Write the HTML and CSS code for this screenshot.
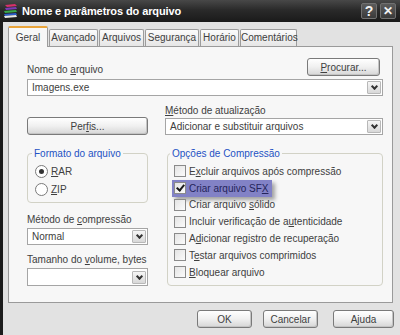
FILE: index.html
```html
<!DOCTYPE html>
<html lang="pt">
<head>
  <meta charset="UTF-8" />
  <title>Nome e parâmetros do arquivo</title>
  <link rel="stylesheet" href="styles.css">
</head>
<body>
  <div class="window">
    <div class="titlebar">
      <svg class="app-icon" width="16" height="16" viewBox="0 0 16 16">
        <polygon points="2,2 12,1 14,3 4,4" fill="#d8306a"/>
        <polygon points="2,5 13,4 14,6 3,7" fill="#7a3cb8"/>
        <polygon points="1,8 13,7 14,9 2,10" fill="#3aa84a"/>
        <polygon points="1,11 13,10 14,12 2,13" fill="#2a5cc8"/>
        <polygon points="1,13 13,12 14,14 2,15" fill="#e8e8e8"/>
      </svg>
      <span class="title">Nome e parâmetros do arquivo</span>
      <span class="tb-btn">?</span>
      <span class="tb-btn close">✕</span>
    </div>

    <div class="frame">
      <div class="tabs">
        <div class="tab active w-geral">Geral</div>
        <div class="tab w-avanc">Avançado</div>
        <div class="tab w-arq">Arquivos</div>
        <div class="tab w-seg">Segurança</div>
        <div class="tab w-hor">Horário</div>
        <div class="tab w-com">Comentários</div>
      </div>

      <div class="panel">
        <div class="row-top">
          <span class="label">Nome do <u>a</u>rquivo</span>
          <button class="btn browse"><u>P</u>rocurar...</button>
        </div>
        <div class="combo wide">
          <span class="combo-text">Imagens.exe</span>
          <span class="arrow"></span>
        </div>

        <div class="grid-mid">
          <button class="btn profiles">Per<u>f</u>is...</button>
          <div>
            <div class="label"><u>M</u>étodo de atualização</div>
            <div class="combo">
              <span class="combo-text">Adicionar e substituir arquivos</span>
              <span class="arrow"></span>
            </div>
          </div>
        </div>

        <div class="grid-low">
          <div class="col-left">
            <fieldset class="group format">
              <legend>Formato do arquivo</legend>
              <div class="opt"><span class="radio on"></span><span><u>R</u>AR</span></div>
              <div class="opt"><span class="radio"></span><span><u>Z</u>IP</span></div>
            </fieldset>
            <div class="label gap-label">Método de <u>c</u>ompressão</div>
            <div class="combo">
              <span class="combo-text">Normal</span>
              <span class="arrow"></span>
            </div>
            <div class="label gap-label2">Tamanho do <u>v</u>olume, bytes</div>
            <div class="combo tall">
              <span class="combo-text"></span>
              <span class="arrow"></span>
            </div>
          </div>

          <fieldset class="group options">
            <legend>Opções de Compressão</legend>
            <div class="check-row"><span class="box"></span><span>E<u>x</u>cluir arquivos após compressão</span></div>
            <div class="check-row marked"><span class="box checked"></span><span>Criar arquivo SF<u>X</u></span></div>
            <div class="check-row"><span class="box"></span><span>Criar arquivo <u>s</u>ólido</span></div>
            <div class="check-row"><span class="box"></span><span>Incluir verificação de a<u>u</u>tenticidade</span></div>
            <div class="check-row"><span class="box"></span><span>A<u>d</u>icionar registro de recuperação</span></div>
            <div class="check-row"><span class="box"></span><span>T<u>e</u>star arquivos comprimidos</span></div>
            <div class="check-row"><span class="box"></span><span><u>B</u>loquear arquivo</span></div>
          </fieldset>
        </div>
      </div>

      <div class="actions">
        <button class="btn ok">OK</button>
        <button class="btn cancel">Cancelar</button>
        <button class="btn help">Ajuda</button>
      </div>
    </div>
  </div>
</body>
</html>
```

FILE: styles.css
```css
body {
  margin: 0;
  background: #e2e2e2;
}
.window {
  width: 400px;
  height: 335px;
  overflow: hidden;
  font-family: "Liberation Sans", Arial, sans-serif;
  font-size: 10px;
  color: #404040;
  background: #e2e2e2;
}
.titlebar {
  height: 22px;
  display: flex;
  align-items: center;
  padding: 0 4px 0 3px;
  background: linear-gradient(#484848, #2a2a2a 45%, #1a1a1a);
  color: #fff;
}
.app-icon {
  margin-right: 3px;
}
.title {
  flex: 1;
  font-weight: bold;
  font-size: 11px;
  letter-spacing: -0.1px;
}
.tb-btn {
  width: 16px;
  height: 16px;
  margin-left: 3px;
  border: 1px solid #707070;
  border-radius: 2px;
  background: linear-gradient(#5c5c5c, #3a3a3a);
  color: #f2f2f2;
  font-weight: bold;
  font-size: 14px;
  line-height: 15px;
  text-align: center;
  box-sizing: border-box;
}
.tb-btn.close {
  font-size: 12px;
}

.frame {
  height: 313px;
  border-left: 3px solid #1c1c1c;
  padding: 4px 0 0 5px;
  box-sizing: border-box;
}
.tabs {
  display: flex;
  align-items: flex-end;
  gap: 1px;
  height: 20px;
  position: relative;
  z-index: 1;
}
.tab {
  height: 17px;
  line-height: 16px;
  text-align: center;
  border: 1px solid #9c9c9c;
  border-bottom: none;
  border-radius: 2px 2px 0 0;
  background: linear-gradient(#fbfbfb, #e6e6e6);
  box-sizing: border-box;
}
.tab.active {
  height: 21px;
  line-height: 20px;
  background: #f7f7f7;
  border-top: 2px solid #e9a43a;
  margin-bottom: -1px;
}
.w-geral { width: 40px; }
.w-avanc { width: 49px; }
.w-arq { width: 45px; }
.w-seg { width: 54px; }
.w-hor { width: 39px; }
.w-com { width: 57px; }

.panel {
  width: 385px;
  height: 257px;
  box-sizing: border-box;
  border: 1px solid #9a9a9a;
  background: #f7f7f7;
  padding: 11px 9px 0 18px;
}
.label {
  line-height: 13px;
}
.row-top {
  display: flex;
  justify-content: space-between;
  align-items: flex-end;
  height: 18px;
}
.btn {
  font: inherit;
  color: #404040;
  height: 18px;
  padding: 0;
  border: 1px solid #7a7a7a;
  border-radius: 3px;
  background: linear-gradient(#ffffff, #f0f0f0 50%, #d6d6d6);
  box-shadow: inset -1px -1px 0 #c4c4c4;
}
.browse {
  width: 73px;
  margin-right: 3px;
}
.combo {
  display: flex;
  align-items: center;
  height: 17px;
  border: 1px solid #a5a5a5;
  background: #fff;
  box-sizing: border-box;
}
.combo.wide {
  margin-top: 3px;
}
.combo.tall {
  height: 18px;
}
.combo-text {
  flex: 1;
  padding-left: 4px;
  white-space: nowrap;
  overflow: hidden;
}
.arrow {
  width: 14px;
  height: 13px;
  margin-right: 1px;
  border: 1px solid #b8b8b8;
  border-radius: 1px;
  background: linear-gradient(#f6f6f6, #d8d8d8);
  box-sizing: border-box;
  position: relative;
}
.arrow::after {
  content: "";
  position: absolute;
  left: 4px;
  top: 2px;
  width: 3px;
  height: 3px;
  border-right: 2px solid #333;
  border-bottom: 2px solid #333;
  transform: rotate(45deg);
}

.grid-mid {
  display: grid;
  grid-template-columns: 121px 1fr;
  column-gap: 17px;
  align-items: end;
  margin-top: 8px;
}
.grid-mid .combo {
  margin-top: 1px;
}
.profiles {
  width: 121px;
}

.grid-low {
  display: grid;
  grid-template-columns: 121px 1fr;
  column-gap: 19px;
  margin-top: 12px;
  align-items: start;
}
.group {
  margin: 0;
  border: 1px solid #d2d2c6;
  border-radius: 4px;
  box-sizing: border-box;
}
.group legend {
  color: #2452c4;
  padding: 0 2px;
  line-height: 13px;
}
.format {
  height: 56px;
  padding: 2px 0 0 7px;
}
.format legend {
  margin-left: -3px;
}
.opt {
  display: flex;
  align-items: center;
  height: 18px;
}
.radio {
  width: 11px;
  height: 11px;
  border: 1px solid #7a7a7a;
  border-radius: 50%;
  background: #fff;
  margin-right: 3px;
  position: relative;
}
.radio.on::after {
  content: "";
  position: absolute;
  left: 3px;
  top: 3px;
  width: 5px;
  height: 5px;
  border-radius: 50%;
  background: #333;
}
.gap-label {
  margin-top: 10px;
  margin-bottom: 2px;
}
.gap-label2 {
  margin-top: 8px;
  margin-bottom: 2px;
}
.options {
  height: 139px;
  padding: 3px 0 0 6px;
}
.options legend {
  margin-left: -4px;
}
.check-row {
  display: flex;
  align-items: center;
  height: 16.8px;
  white-space: nowrap;
}
.box {
  width: 10px;
  height: 10px;
  border: 1px solid #8a8a8a;
  background: linear-gradient(135deg, #e4e4e4, #fbfbfb);
  margin-right: 3px;
  position: relative;
}
.box.checked::after {
  content: "";
  position: absolute;
  left: 3px;
  top: 0;
  width: 3px;
  height: 6px;
  border-right: 2px solid #1a1a1a;
  border-bottom: 2px solid #1a1a1a;
  transform: rotate(40deg);
}
.check-row.marked {
  width: 100px;
  margin-left: -2px;
  padding-left: 2px;
  box-sizing: border-box;
  background: #8282c6;
  color: #24245a;
  box-shadow: 3px 3px 4px rgba(0, 0, 0, 0.35);
}

.actions {
  display: flex;
  justify-content: flex-end;
  margin-top: 7px;
  padding-right: 6px;
}
.ok { width: 55px; }
.cancel { width: 55px; margin-left: 11px; }
.help { width: 61px; margin-left: 15px; }
```
